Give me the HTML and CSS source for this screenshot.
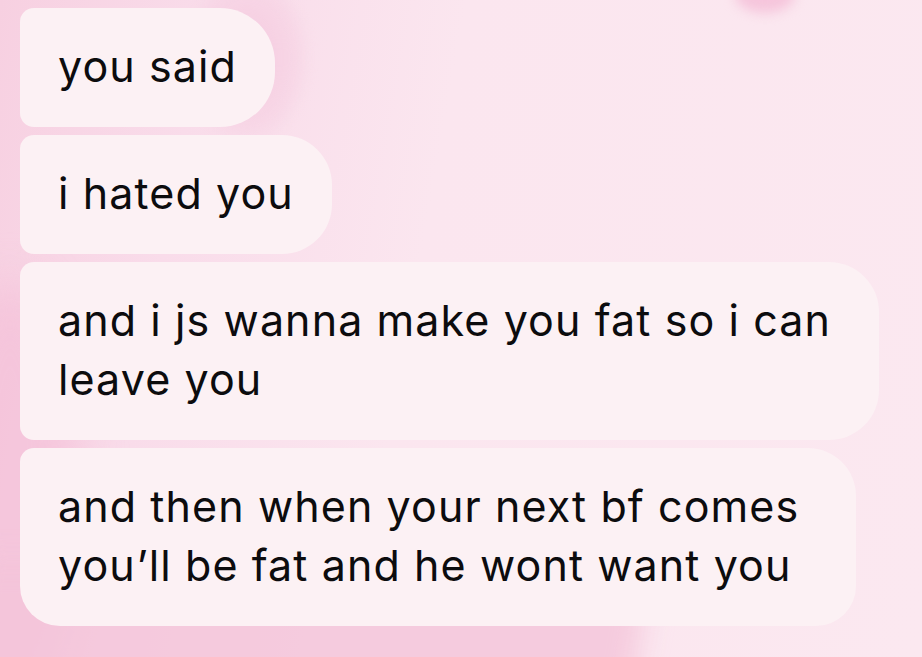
FILE: index.html
```html
<!DOCTYPE html>
<html>
<head>
<meta charset="utf-8">
<link rel="stylesheet" href="styles.css">
</head>
<body>
<div class="backdrop">
  <div class="blob blob-heart"></div>
  <div class="blob blob-top"></div>
  <div class="blob blob-left"></div>
  <div class="blob blob-bottom"></div>
</div>
<main class="thread">
  <div class="bubble first">you said</div>
  <div class="bubble">i hated you</div>
  <div class="bubble wide">and i js wanna make you fat so i can<br>leave you</div>
  <div class="bubble wide last">and then when your next bf comes<br>you’ll be fat and he wont want you</div>
</main>
</body>
</html>
```
FILE: styles.css
```css
html, body {
  margin: 0;
  width: 922px;
  height: 657px;
  overflow: hidden;
}
body {
  position: relative;
  background: linear-gradient(100deg, #f7d0e1 0%, #f9dcea 20%, #fbe6ef 45%, #fbe8f0 100%);
  font-family: "Inter", "Roboto", "Liberation Sans", sans-serif;
}
.backdrop {
  position: absolute;
  inset: 0;
  overflow: hidden;
}
.blob {
  position: absolute;
  border-radius: 50%;
}
.blob-heart {
  left: 185px;
  top: -30px;
  width: 125px;
  height: 175px;
  background: radial-gradient(ellipse at 50% 50%, rgba(242,190,215,0.6), rgba(245,202,223,0.4) 55%, rgba(250,225,236,0) 72%);
  filter: blur(5px);
}
.blob-top {
  left: 735px;
  top: -25px;
  width: 60px;
  height: 38px;
  background: rgba(244,192,216,0.85);
  filter: blur(6px);
}
.blob-left {
  left: -60px;
  top: 280px;
  width: 140px;
  height: 420px;
  background: rgba(244,192,216,0.75);
  filter: blur(22px);
}
.blob-bottom {
  left: -40px;
  top: 560px;
  width: 680px;
  height: 160px;
  border-radius: 0;
  background: rgba(244,196,218,0.8);
  filter: blur(14px);
  transform: skewX(-10deg);
}
.thread {
  position: relative;
  display: flex;
  flex-direction: column;
  align-items: flex-start;
  gap: 8px;
  padding: 8px 0 0 20px;
}
.bubble {
  background: #fcf1f4;
  color: #0c0c0e;
  font-size: 43px;
  line-height: 59px;
  padding: 29px 38px 31px 38px;
  border-radius: 14px 50px 50px 14px;
  letter-spacing: 1.1px;
  white-space: nowrap;
}
.bubble.wide {
  padding-right: 48px;
}
.bubble.first {
  border-radius: 14px 55px 55px 14px;
}
.bubble.last {
  padding-right: 57px;
  border-radius: 14px 48px 40px 40px;
}
```
